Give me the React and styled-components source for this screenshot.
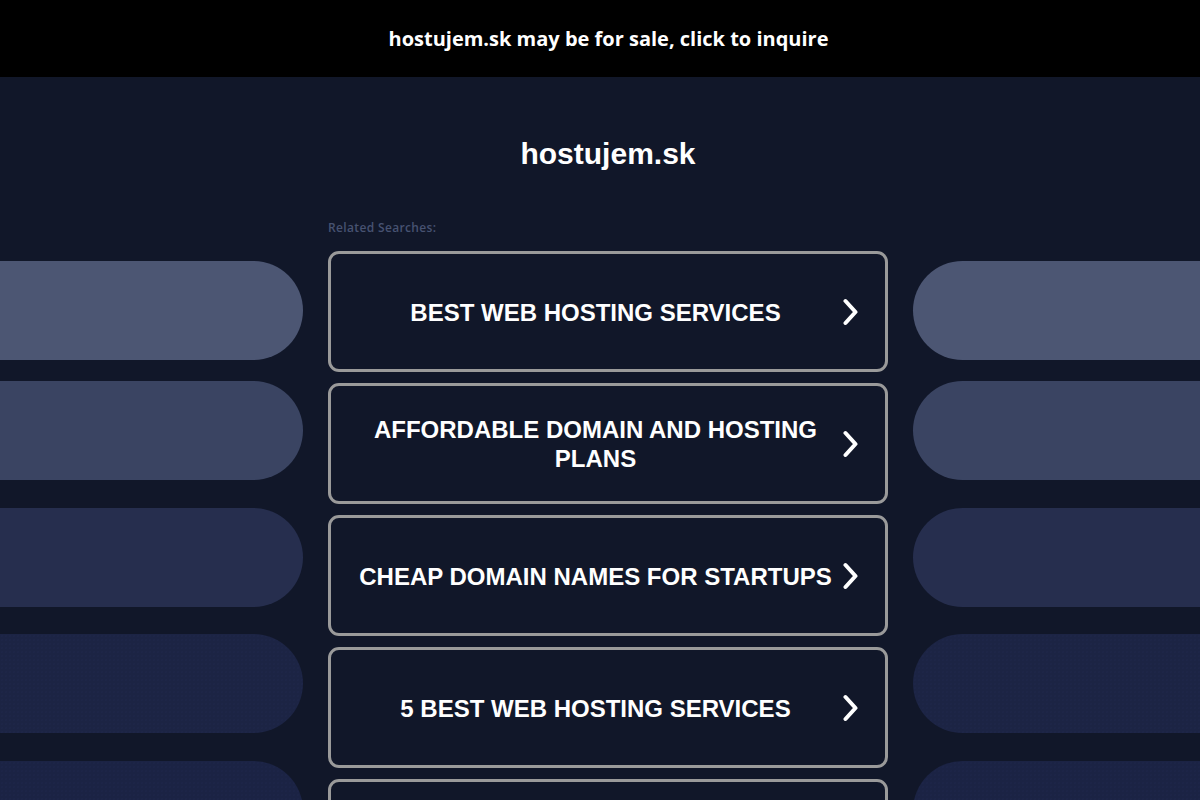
import React from "react";
import styled, { createGlobalStyle } from "styled-components";

const GlobalStyle = createGlobalStyle`
  html, body {
    margin: 0;
    padding: 0;
    background: #111729;
    overflow: hidden;
  }
  * { box-sizing: border-box; }
`;

const Page = styled.div`
  width: 1200px;
  min-height: 800px;
  background: #111729;
`;

const TopBar = styled.a`
  display: flex;
  align-items: center;
  justify-content: center;
  height: 77px;
  padding-left: 17px;
  padding-bottom: 1px;
  background: #000;
  color: #fff;
  font-family: "Open Sans", "Noto Sans", sans-serif;
  font-weight: 700;
  font-size: 20px;
  text-decoration: none;
`;

const Body = styled.div`
  display: grid;
  grid-template-columns: 303px 560px 1fr;
  column-gap: 25px;
`;

const PillColumn = styled.div`
  display: flex;
  flex-direction: column;
  padding-top: 184px;
`;

const Pill = styled.div`
  height: 99px;
  margin-top: ${(p) => p.$offset}px;
  background-color: ${(p) => p.$color};
  border-radius: ${(p) => (p.$side === "left" ? "0 50px 50px 0" : "50px 0 0 50px")};
  ${(p) =>
    p.$dotted &&
    `background-image: radial-gradient(rgba(44, 56, 100, 0.22) 0.6px, transparent 0.8px);
     background-size: 4px 4px;`}
`;

const Center = styled.div`
  display: flex;
  flex-direction: column;
  padding-top: 59px;
`;

const Title = styled.h1`
  margin: 0;
  font-family: "Liberation Sans", Arial, sans-serif;
  font-weight: 700;
  font-size: 30px;
  line-height: 36px;
  color: #fff;
  text-align: center;
`;

const Label = styled.div`
  margin-top: 48px;
  font-family: "Open Sans", "Noto Sans", sans-serif;
  font-weight: 600;
  font-size: 12px;
  line-height: 16px;
  letter-spacing: 0.35px;
  color: #475271;
`;

const List = styled.div`
  display: flex;
  flex-direction: column;
  gap: 11px;
  margin-top: 15px;
`;

const SearchButton = styled.a`
  display: flex;
  align-items: center;
  height: 121px;
  padding: 1px 27px 0 17px;
  border: 3px solid #9a9a9a;
  border-radius: 11px;
  color: #fff;
  text-decoration: none;
`;

const ButtonText = styled.span`
  flex: 1;
  text-align: center;
  font-family: "Liberation Sans", Arial, sans-serif;
  font-weight: 700;
  font-size: 24px;
  line-height: 29px;
  text-transform: uppercase;
`;

const Chevron = () => (
  <svg width="15" height="28" viewBox="0 0 15 28" aria-hidden="true">
    <polyline
      points="2.5,3 12.5,14 2.5,25"
      fill="none"
      stroke="#fff"
      strokeWidth="4"
      strokeLinecap="round"
      strokeLinejoin="round"
    />
  </svg>
);

const pills = [
  { color: "#4c5673", offset: 0 },
  { color: "#3a4462", offset: 21 },
  { color: "#262e4e", offset: 28 },
  { color: "#1c2444", offset: 27, dotted: true },
  { color: "#1b2344", offset: 28, dotted: true },
];

const searches = [
  "Best Web Hosting Services",
  "Affordable Domain and Hosting Plans",
  "Cheap Domain Names for Startups",
  "5 Best Web Hosting Services",
  "Web Hosting",
];

export default function App() {
  return (
    <Page>
      <GlobalStyle />
      <TopBar href="#">hostujem.sk may be for sale, click to inquire</TopBar>
      <Body>
        <PillColumn>
          {pills.map((p, i) => (
            <Pill key={i} $side="left" $color={p.color} $offset={p.offset} $dotted={p.dotted} />
          ))}
        </PillColumn>
        <Center>
          <Title>hostujem.sk</Title>
          <Label>Related Searches:</Label>
          <List>
            {searches.map((s) => (
              <SearchButton key={s} href="#">
                <ButtonText>{s}</ButtonText>
                <Chevron />
              </SearchButton>
            ))}
          </List>
        </Center>
        <PillColumn>
          {pills.map((p, i) => (
            <Pill key={i} $side="right" $color={p.color} $offset={p.offset} $dotted={p.dotted} />
          ))}
        </PillColumn>
      </Body>
    </Page>
  );
}
